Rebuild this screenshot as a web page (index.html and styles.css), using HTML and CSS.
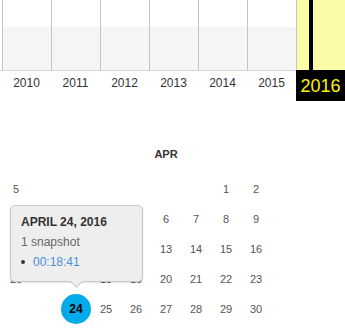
FILE: index.html
```html
<!DOCTYPE html>
<html>
<head>
<title>Calendar</title>
<link rel="stylesheet" href="styles.css">
</head>
<body>

<div class="sparkline">
  <div class="col"><div class="fill"></div></div>
  <div class="col"><div class="fill"></div></div>
  <div class="col"><div class="fill"></div></div>
  <div class="col"><div class="fill"></div></div>
  <div class="col"><div class="fill"></div></div>
  <div class="col"><div class="fill"></div></div>
  <div class="col current"><div class="tick"></div></div>
</div>
<div class="years">
  <div class="year">2010</div>
  <div class="year">2011</div>
  <div class="year">2012</div>
  <div class="year">2013</div>
  <div class="year">2014</div>
  <div class="year">2015</div>
  <div class="year current">2016</div>
</div>

<div class="months">
  <div class="month">
    <div class="month-name">MAR</div>
    <div class="days">
      <span></span><span></span><span>1</span><span>2</span><span>3</span><span>4</span><span>5</span>
      <span>6</span><span>7</span><span>8</span><span>9</span><span>10</span><span>11</span><span>12</span>
      <span>13</span><span>14</span><span>15</span><span>16</span><span>17</span><span>18</span><span>19</span>
      <span>20</span><span>21</span><span>22</span><span>23</span><span>24</span><span>25</span><span>26</span>
      <span>27</span><span>28</span><span>29</span><span>30</span><span>31</span><span></span><span></span>
    </div>
  </div>
  <div class="month">
    <div class="month-name">APR</div>
    <div class="days">
      <span></span><span></span><span></span><span></span><span></span><span>1</span><span>2</span>
      <span>3</span><span>4</span><span>5</span><span>6</span><span>7</span><span>8</span><span>9</span>
      <span>10</span><span>11</span><span>12</span><span>13</span><span>14</span><span>15</span><span>16</span>
      <span>17</span><span>18</span><span>19</span><span>20</span><span>21</span><span>22</span><span>23</span>
      <span class="captured">
        <b class="dot">24</b>
        <div class="popup">
          <div class="popup-date">APRIL 24, 2016</div>
          <div class="popup-count">1 snapshot</div>
          <ul class="popup-list">
            <li><i class="bullet"></i><a href="#">00:18:41</a></li>
          </ul>
        </div>
      </span>
      <span>25</span><span>26</span><span>27</span><span>28</span><span>29</span><span>30</span>
    </div>
  </div>
</div>

</body>
</html>
```

FILE: styles.css
```css
body {
  margin: 0;
  overflow: hidden;
  background: #fff;
  font-family: "Liberation Sans", Arial, sans-serif;
}

.sparkline {
  display: flex;
  height: 70px;
  padding-left: 2px;
  border-bottom: 1px solid #d6d6d6;
}

.col {
  display: flex;
  flex-direction: column;
  justify-content: flex-end;
  width: 49px;
  flex: none;
  border-left: 1px solid #c4c4c4;
  box-sizing: border-box;
}

.fill {
  height: 43px;
  background-color: #f5f5f5;
}

.col.current {
  flex-direction: row;
  justify-content: flex-start;
  background-color: #fcfca6;
}

.tick {
  width: 4px;
  margin-left: 12px;
  background-color: #000;
}

.years {
  display: flex;
  align-items: flex-start;
  padding-left: 2px;
}

.year {
  width: 49px;
  flex: none;
  text-align: center;
  font-size: 12px;
  line-height: 24px;
  color: #333;
}

.year.current {
  margin-top: -1px;
  height: 31px;
  line-height: 32px;
  font-size: 18px;
  color: #fff200;
  background-color: #000;
}

.months {
  display: flex;
  gap: 30px;
  margin-top: 38px;
  margin-left: -179px;
}

.month {
  width: 210px;
  flex: none;
}

.month-name {
  height: 30px;
  margin-bottom: 5px;
  line-height: 30px;
  text-align: center;
  font-size: 11px;
  font-weight: bold;
  color: #333;
}

.days {
  display: grid;
  grid-template-columns: repeat(7, 30px);
  grid-auto-rows: 30px;
}

.days span {
  display: flex;
  align-items: center;
  justify-content: center;
  font-size: 11px;
  color: #555;
}

.days .captured {
  position: relative;
}

.dot {
  width: 30px;
  height: 30px;
  line-height: 30px;
  border-radius: 50%;
  text-align: center;
  font-size: 12px;
  color: #000;
  background-color: #03aaea;
}

.popup {
  position: absolute;
  left: -51px;
  bottom: 42px;
  width: 133px;
  box-sizing: border-box;
  padding: 6px 10px 9px;
  border: 1px solid #c8c8c8;
  border-radius: 5px;
  background-color: #eee;
  box-shadow: 0 1px 2px rgba(0, 0, 0, 0.12);
  font-size: 12px;
  line-height: 20px;
  text-align: left;
}

.popup::after {
  content: "";
  position: absolute;
  left: 61px;
  bottom: -5px;
  width: 8px;
  height: 8px;
  background-color: #eee;
  border-right: 1px solid #c8c8c8;
  border-bottom: 1px solid #c8c8c8;
  transform: rotate(45deg);
}

.popup-date {
  font-weight: bold;
  color: #333;
  white-space: nowrap;
}

.popup-count {
  color: #666;
}

.popup-list {
  margin: 0;
  padding: 0;
  list-style: none;
}

.popup-list li {
  display: flex;
  align-items: center;
}

.bullet {
  width: 4px;
  height: 4px;
  margin: 0 8px 0 0;
  border-radius: 50%;
  background-color: #333;
}

.popup-list a {
  color: #4a8fd6;
  text-decoration: none;
}
```
